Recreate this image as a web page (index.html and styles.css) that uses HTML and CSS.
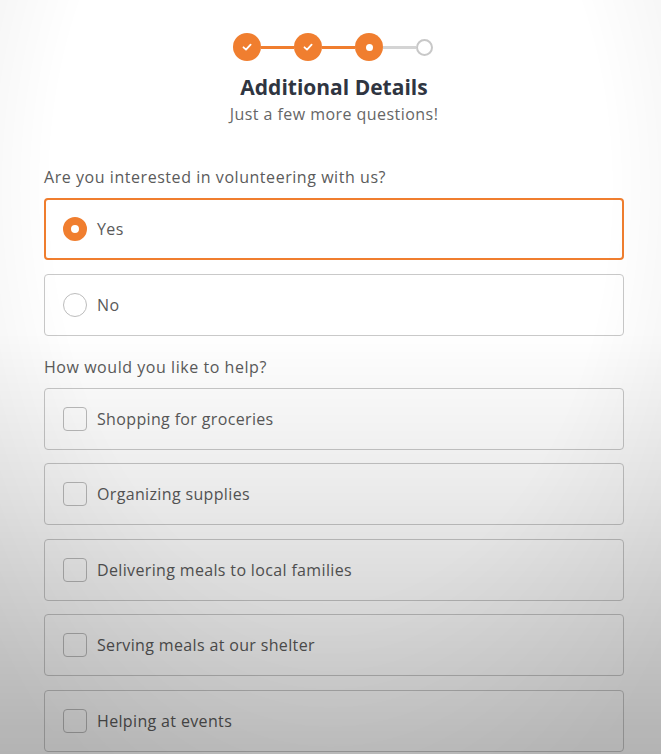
FILE: index.html
```html
<!DOCTYPE html>
<html lang="en">
<head>
    <meta charset="UTF-8">
    <meta name="viewport" content="width=device-width, initial-scale=1.0">
    <title>Additional Details</title>
    <link rel="stylesheet" href="styles.css">
</head>
<body>

    <div class="form">
        <div class="stepper">
            <span class="step done">
                <svg viewBox="0 0 12 12" width="12" height="12"><path d="M2.5 6.3 L5 8.6 L9.6 3.6" fill="none" stroke="#fff" stroke-width="1.8" stroke-linecap="round" stroke-linejoin="round"/></svg>
            </span>
            <span class="bar"></span>
            <span class="step done">
                <svg viewBox="0 0 12 12" width="12" height="12"><path d="M2.5 6.3 L5 8.6 L9.6 3.6" fill="none" stroke="#fff" stroke-width="1.8" stroke-linecap="round" stroke-linejoin="round"/></svg>
            </span>
            <span class="bar"></span>
            <span class="step current"><span class="dot"></span></span>
            <span class="bar todo"></span>
            <span class="step next"></span>
        </div>

        <h1 class="title">Additional Details</h1>
        <p class="subtitle">Just a few more questions!</p>

        <p class="question">Are you interested in volunteering with us?</p>
        <div class="options">
            <label class="option selected">
                <span class="radio"></span>
                Yes
            </label>
            <label class="option">
                <span class="radio"></span>
                No
            </label>
        </div>

        <p class="question">How would you like to help?</p>
        <div class="options">
            <label class="option"><span class="check"></span> Shopping for groceries</label>
            <label class="option"><span class="check"></span> Organizing supplies</label>
            <label class="option"><span class="check"></span> Delivering meals to local families</label>
            <label class="option"><span class="check"></span> Serving meals at our shelter</label>
            <label class="option"><span class="check"></span> Helping at events</label>
        </div>
    </div>

</body>
</html>
```

FILE: styles.css
```css
body {
    font-family: "Open Sans", Lato, sans-serif;
    margin: 0;
    padding: 0;
    background: #fff;
    color: #555;
    height: 754px;
    overflow: hidden;
}

/* gray fade over the lower part of the screen */
body::after {
    content: "";
    position: fixed;
    inset: 0;
    pointer-events: none;
    background:
        radial-gradient(ellipse 70% 90% at 50% 25%, rgba(0, 0, 0, 0) 60%, rgba(0, 0, 0, 0.08) 100%),
        linear-gradient(to bottom, rgba(0, 0, 0, 0) 44%, rgba(0, 0, 0, 0.08) 65%, rgba(0, 0, 0, 0.24) 100%);
}

.form {
    width: 580px;
    margin-left: 44px;
    padding-top: 33px;
}

.stepper {
    display: flex;
    align-items: center;
    justify-content: center;
    padding-right: 2px;
}

.step {
    width: 28px;
    height: 28px;
    border-radius: 50%;
    background-color: #f07e2f;
    display: flex;
    align-items: center;
    justify-content: center;
    flex-shrink: 0;
}

.step .dot {
    width: 7px;
    height: 7px;
    border-radius: 50%;
    background-color: #fff;
}

.step.next {
    width: 13px;
    height: 13px;
    background-color: #fff;
    border: 2px solid #c8c8c8;
}

.bar {
    width: 33px;
    height: 3px;
    background-color: #f07e2f;
}

.bar.todo {
    background-color: #d4d4d4;
}

.title {
    font-size: 21px;
    font-weight: 700;
    color: #2f3541;
    text-align: center;
    margin: 12px 0 0;
    line-height: 28px;
}

.subtitle {
    font-size: 16px;
    color: #666;
    text-align: center;
    margin: 3px 0 0;
    line-height: 20px;
    letter-spacing: 0.45px;
}

.question {
    font-size: 16px;
    color: #5b5b5b;
    margin: 43px 0 11px;
    line-height: 20px;
    letter-spacing: 0.55px;
}

.options + .question {
    margin-top: 21px;
}

.options {
    display: flex;
    flex-direction: column;
    gap: 13.5px;
}

.option {
    display: flex;
    align-items: center;
    gap: 10px;
    height: 62px;
    box-sizing: border-box;
    padding-left: 18px;
    border: 1px solid #c9c9c9;
    border-radius: 4px;
    background-color: #fff;
    font-size: 16px;
    color: #5a5a5a;
    letter-spacing: 0.35px;
}

.option.selected {
    border: 2px solid #f07e2f;
    padding-left: 17px;
}

.radio {
    width: 24px;
    height: 24px;
    box-sizing: border-box;
    border-radius: 50%;
    border: 1px solid #bdbdbd;
    background-color: #fff;
}

.selected .radio {
    border: 8px solid #f07e2f;
}

.check {
    width: 24px;
    height: 24px;
    box-sizing: border-box;
    border-radius: 4px;
    border: 1px solid #bdbdbd;
    background-color: #fff;
}
```
